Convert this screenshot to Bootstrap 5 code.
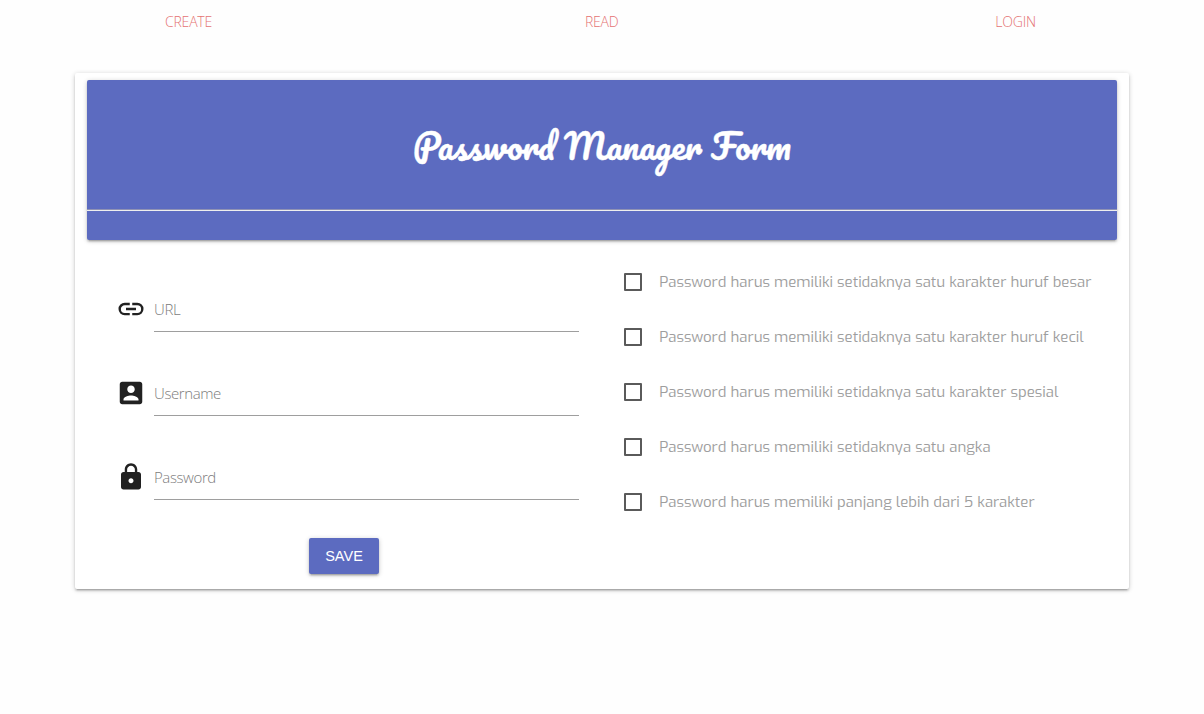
<!DOCTYPE html>
<html lang="id">
<head>
<meta charset="utf-8">
<meta name="viewport" content="width=device-width, initial-scale=1">
<title>Password Manager Form</title>
<link href="https://cdn.jsdelivr.net/npm/bootstrap@5.3.0/dist/css/bootstrap.min.css" rel="stylesheet">
<style>
body{font-family:"Segoe UI","Open Sans",sans-serif;background:#fefefe;color:#212121}
.z1{box-shadow:0 2px 2px 0 rgba(0,0,0,.14),0 3px 1px -2px rgba(0,0,0,.12),0 1px 5px 0 rgba(0,0,0,.2)}
.topnav{height:72.5px;padding:12px 168px 0 165px}
.topnav a{font-size:14px;letter-spacing:-.2px;line-height:20px;font-weight:300;color:#e57373;text-decoration:none;white-space:nowrap}
.topnav a:nth-child(2){margin-right:4px}
.panel{width:1054px;height:516.5px;margin:0 auto;background:#fff;border-radius:2px;padding:7.5px 12px 0}
.banner{height:160px;background:#5c6bc0;border-radius:2px;color:#fff}
.banner-top{height:129px;padding-top:2px}
.divider{height:2px;border-top:1px solid #8f92b4;border-bottom:1px solid #eee}
.title{font-family:Pacifico,cursive;font-weight:400;font-size:34.2px;line-height:1;white-space:nowrap;-webkit-text-stroke:.35px #fff}
.fields{width:515px;padding:20px 23px 0 29px}
.field{height:84px}
.field svg{width:30px;height:30px;flex:none;margin-top:33.8px}
.field label{display:block;font-size:15px;line-height:24px;font-weight:300;color:#7c7c7c;letter-spacing:-.4px}
.line{width:425px;height:72px;padding-top:37px;margin-left:8px;border-bottom:1px solid #9e9e9e}
.rules{padding:29px 0 0 22px}
.rule{height:25px;margin-bottom:30px}
.box{width:18px;height:18px;border:2px solid #5a5a5a;border-radius:1px}
.rule label{font-family:Exo,"Open Sans",sans-serif;font-weight:400;font-size:15px;color:#9e9e9e;padding-top:2px;margin-left:17.3px;white-space:nowrap}
.save{width:70px;height:36px;margin:26px 0 0 193px;background:#5c6bc0;color:#fff;border:0;border-radius:2px;font:14.5px/36px "Liberation Sans",sans-serif;padding:0}
</style>
</head>
<body class="min-vh-100">
<nav class="topnav d-flex justify-content-between"><a href="#">CREATE</a><a href="#">READ</a><a href="#">LOGIN</a></nav>
<main class="panel z1">
<div class="banner z1">
<div class="banner-top d-flex align-items-center justify-content-center"><h1 class="title m-0">Password Manager Form</h1></div>
<div class="divider"></div>
</div>
<div class="d-flex"><form class="fields">
<div class="field d-flex"><svg viewBox="0 0 24 24" fill="#212121"><path d="M3.9 12c0-1.71 1.39-3.1 3.1-3.1h4V7H7a5 5 0 0 0 0 10h4v-1.900H7A3.100 3.100 0 0 1 3.900 12zM8 13h8v-2H8v2zm9-6h-4v1.900h4a3.100 3.100 0 0 1 0 6.200h-4V17h4a5 5 0 0 0 0-10z"/></svg><div class="line"><label>URL</label></div></div>
<div class="field d-flex"><svg viewBox="0 0 24 24" fill="#212121"><path d="M3 5v14c0 1.100.89 2 2 2h14c1.100 0 2-.9 2-2V5c0-1.100-.9-2-2-2H5c-1.110 0-2 .9-2 2zm12 4c0 1.660-1.340 3-3 3s-3-1.340-3-3 1.340-3 3-3 3 1.340 3 3zm-9 8c0-2 4-3.100 6-3.100s6 1.100 6 3.100v1H6v-1z"/></svg><div class="line"><label>Username</label></div></div>
<div class="field d-flex"><svg viewBox="0 0 24 24" fill="#212121"><path d="M18 8h-1V6c0-2.760-2.240-5-5-5S7 3.240 7 6v2H6c-1.100 0-2 .9-2 2v10c0 1.100.9 2 2 2h12c1.100 0 2-.9 2-2V10c0-1.100-.9-2-2-2zm-6 9c-1.100 0-2-.9-2-2s.9-2 2-2 2 .9 2 2-.9 2-2 2zm3.100-9H8.900V6c0-1.710 1.390-3.100 3.100-3.100s3.100 1.390 3.100 3.100v2z"/></svg><div class="line"><label>Password</label></div></div>
<button class="save z1" type="button">SAVE</button>
</form>
<div class="rules">
<div class="rule d-flex align-items-center"><span class="box"></span><label>Password harus memiliki setidaknya satu karakter huruf besar</label></div>
<div class="rule d-flex align-items-center"><span class="box"></span><label>Password harus memiliki setidaknya satu karakter huruf kecil</label></div>
<div class="rule d-flex align-items-center"><span class="box"></span><label>Password harus memiliki setidaknya satu karakter spesial</label></div>
<div class="rule d-flex align-items-center"><span class="box"></span><label>Password harus memiliki setidaknya satu angka</label></div>
<div class="rule d-flex align-items-center"><span class="box"></span><label>Password harus memiliki panjang lebih dari 5 karakter</label></div>
</div></div>
</main>
</body>
</html>
